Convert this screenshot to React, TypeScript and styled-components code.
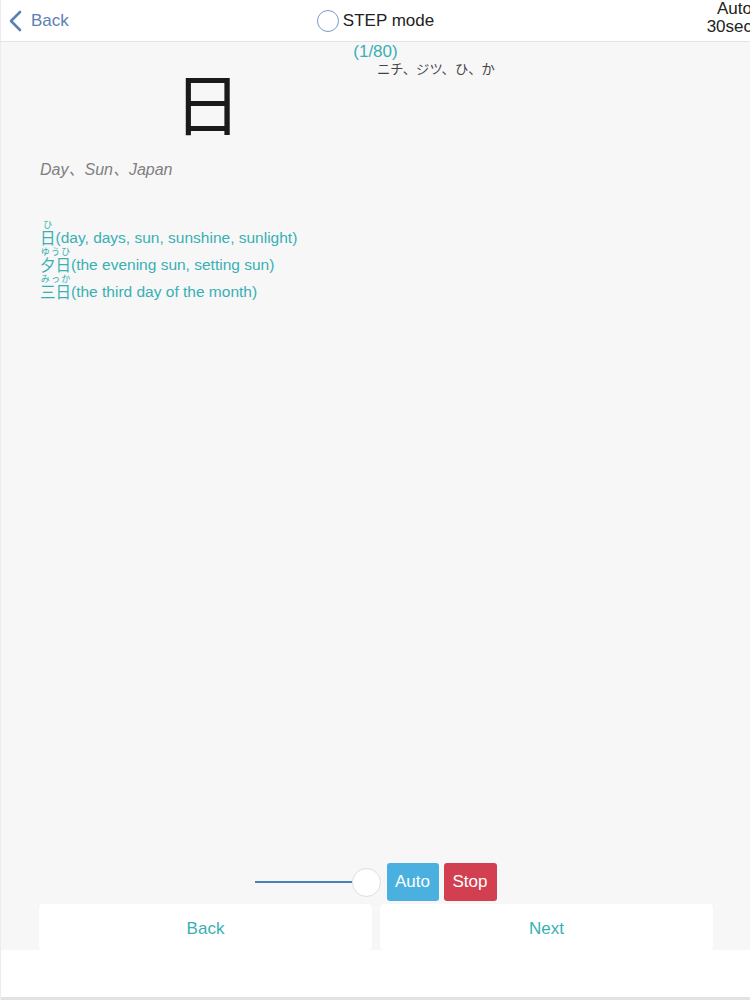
import styled, { createGlobalStyle } from 'styled-components';

const GlobalStyle = createGlobalStyle`
  html, body {
    margin: 0;
    padding: 0;
    background: #f7f7f8;
    font-family: 'Liberation Sans', Arial, 'Noto Sans CJK JP', sans-serif;
  }
`;

const teal = '#38b0b3';

const Page = styled.div`
  display: flex;
  flex-direction: column;
  height: 1000px;
  box-sizing: border-box;
  border-left: 1px solid #ececee;
  overflow: hidden;
`;

const Header = styled.header`
  display: grid;
  grid-template-columns: 1fr auto 1fr;
  align-items: center;
  height: 41px;
  background: #fff;
  border-bottom: 1px solid #e4e4e6;
`;

const BackLink = styled.a`
  display: flex;
  align-items: center;
  gap: 9px;
  padding-left: 7px;
  color: #5b80b6;
  font-size: 17px;
  text-decoration: none;
  cursor: pointer;
`;

const StepToggle = styled.label`
  display: flex;
  align-items: center;
  gap: 4px;
  font-size: 17px;
  color: #222;
`;

const Radio = styled.span`
  width: 20px;
  height: 20px;
  border: 1.5px solid #7a9cc4;
  border-radius: 50%;
  background: #fff;
`;

const AutoInfo = styled.div`
  justify-self: end;
  text-align: right;
  font-size: 17px;
  line-height: 18px;
  color: #222;
  margin-right: -2px;
  align-self: start;
`;

const Main = styled.main`
  flex: 1;
  display: flex;
  flex-direction: column;
`;

const Counter = styled.div`
  text-align: center;
  color: ${teal};
  font-size: 17px;
  line-height: 20px;
`;

const KanjiRow = styled.div`
  display: grid;
  grid-template-columns: 337px 1fr;
  padding-left: 38px;
`;

const KanjiBox = styled.div`
  display: flex;
  justify-content: center;
  align-items: flex-start;
`;

const Kanji = styled.div`
  font-family: 'Noto Sans CJK JP', sans-serif;
  font-size: 67px;
  line-height: 78px;
  color: #1a1a1a;
`;

const Readings = styled.div`
  font-family: 'Noto Sans CJK JP', sans-serif;
  font-size: 13.3px;
  line-height: 14px;
  color: #444;
  padding-left: 1px;
`;

const Meaning = styled.div`
  padding: 16px 0 0 39px;
  font-size: 16px;
  font-style: italic;
  color: #808080;
`;

const Compounds = styled.div`
  padding: 39px 0 0 39px;
  display: flex;
  flex-direction: column;
`;

const Compound = styled.div`
  height: 27px;
  display: flex;
  align-items: flex-end;
  font-size: 15.5px;
  line-height: 17px;
  color: ${teal};

  ruby {
    font-family: 'Noto Sans CJK JP', sans-serif;
    ruby-position: over;
  }
  rt {
    font-size: 9px;
    line-height: 9px;
  }
`;

const Controls = styled.div`
  display: flex;
  justify-content: center;
  align-items: center;
  padding-bottom: 2px;
`;

const Track = styled.div`
  width: 97px;
  height: 2px;
  background: #4a7fb8;
`;

const Thumb = styled.div`
  width: 27px;
  height: 27px;
  border-radius: 50%;
  background: #fff;
  border: 1px solid #dedede;
`;

const ActionButton = styled.button<{ $tone: 'auto' | 'stop' }>`
  height: 38px;
  width: ${(p) => (p.$tone === 'auto' ? '52px' : '53px')};
  border: none;
  border-radius: 3px;
  color: #fff;
  font-family: inherit;
  font-size: 17px;
  padding: 0;
  margin-left: ${(p) => (p.$tone === 'auto' ? '6px' : '5px')};
  background: ${(p) => (p.$tone === 'auto' ? '#4ab0df' : '#d23f50')};
`;

const NavRow = styled.nav`
  display: grid;
  grid-template-columns: 1fr 1fr;
  gap: 8px;
  padding: 1px 37px 0 38px;
`;

const NavButton = styled.button`
  height: 46px;
  border: none;
  border-radius: 4px;
  background: #fff;
  color: ${teal};
  font-family: inherit;
  font-size: 17px;
  padding-top: 4px;
  box-shadow: 0 0 1px rgba(0, 0, 0, 0.04);
`;

const Footer = styled.footer`
  height: 47px;
  background: #fff;
  border-bottom: 3px solid #e2e2e4;
`;

const Chevron = () => (
  <svg width="14" height="22" viewBox="0 0 14 22">
    <path d="M12 2 L3 11 L12 20" fill="none" stroke="#5b80b6" strokeWidth="2.6" strokeLinecap="round" strokeLinejoin="round" />
  </svg>
);

const compounds = [
  { word: '日', reading: 'ひ', gloss: '(day, days, sun, sunshine, sunlight)' },
  { word: '夕日', reading: 'ゆうひ', gloss: '(the evening sun, setting sun)' },
  { word: '三日', reading: 'みっか', gloss: '(the third day of the month)' },
];

export default function App() {
  return (
    <Page>
      <GlobalStyle />
      <Header>
        <BackLink>
          <Chevron />
          Back
        </BackLink>
        <StepToggle>
          <Radio />
          STEP mode
        </StepToggle>
        <AutoInfo>
          Auto
          <br />
          30sec
        </AutoInfo>
      </Header>
      <Main>
        <Counter>(1/80)</Counter>
        <KanjiRow>
          <KanjiBox>
            <Kanji>日</Kanji>
          </KanjiBox>
          <Readings>ニチ、ジツ、ひ、か</Readings>
        </KanjiRow>
        <Meaning>Day、Sun、Japan</Meaning>
        <Compounds>
          {compounds.map((c) => (
            <Compound key={c.word}>
              <ruby>
                {c.word}
                <rt>{c.reading}</rt>
              </ruby>
              {c.gloss}
            </Compound>
          ))}
        </Compounds>
      </Main>
      <Controls>
        <Track />
        <Thumb />
        <ActionButton $tone="auto">Auto</ActionButton>
        <ActionButton $tone="stop">Stop</ActionButton>
      </Controls>
      <NavRow>
        <NavButton>Back</NavButton>
        <NavButton>Next</NavButton>
      </NavRow>
      <Footer />
    </Page>
  );
}
